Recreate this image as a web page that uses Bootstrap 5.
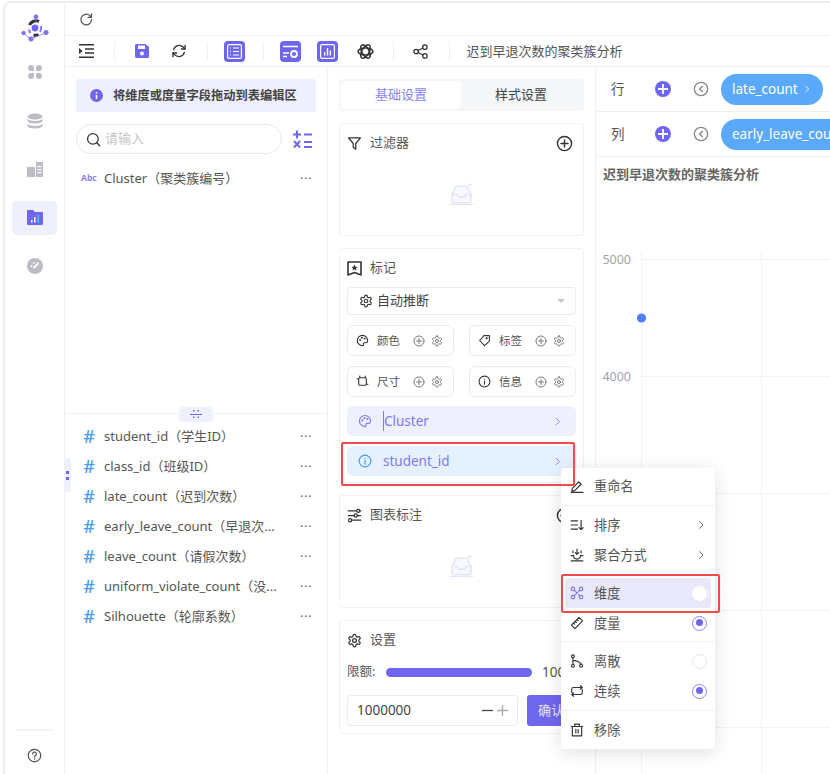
<!DOCTYPE html>
<html lang="zh-CN">
<head>
    <title>聚类簇分析</title>
    <meta charset="utf-8">
    <meta name="viewport" content="width=device-width, initial-scale=1">
    <link href="https://cdn.jsdelivr.net/npm/bootstrap@5.3.3/dist/css/bootstrap.min.css" rel="stylesheet">
    <script src="https://cdn.jsdelivr.net/npm/bootstrap@5.3.3/dist/js/bootstrap.bundle.min.js"></script>
    <style>
        html, body { width: 830px; height: 774px; overflow: hidden; background: #fff; }
        body { font-family: "Noto Sans", "Noto Sans CJK SC", sans-serif; font-size: 13px; color: #555; }
        svg { display: block; flex: none; }
        .ic { fill: none; stroke: currentColor; stroke-width: 2; stroke-linecap: round; stroke-linejoin: round; }

        .app-frame { position: relative; margin: 1px 0 0 3px; width: 827px; height: 773px; border-top: 2px solid #eeeeef; border-left: 2px solid #eeeeef; border-top-left-radius: 8px; }
        .side-rail { flex: none; width: 60px; border-right: 1px solid #f0f0f2; color: #bcbcc4; padding-top: 8px; }
        .rail-item { width: 45px; height: 34px; margin-bottom: 14.5px; border-radius: 5px; }
        .rail-item.is-on { background: #eff0fd; }
        .rail-logo { height: 34px; margin-bottom: 10px; }
        .rail-foot { border-top: 2px solid #f3f3f5; width: 38px; padding-top: 17px; color: #555; margin-bottom: 11px; }

        .top-strip { height: 33px; padding-left: 14px; border-bottom: 1px solid #f3f3f5; color: #555; }
        .tool-strip { height: 31px; padding-left: 2.5px; border-bottom: 1px solid #f0f0f2; color: #333; }
        .tool-cell { width: 37.5px; flex: none; }
        .tool-sep { width: 1px; height: 19px; background: #f0f0f2; margin: 0 8px 0 9px; flex: none; }
        .tool-btn { width: 21px; height: 21px; border-radius: 4px; background: #6f66ee; color: #fff; }
        .tool-title { margin-left: 9px; padding-top: 2px; font-size: 13px; color: #555; white-space: nowrap; }
        .purple { color: #6f66ee; }

        .field-pane { flex: none; width: 263px; border-right: 1px solid #f0f0f2; position: relative; }
        .field-top { height: 347px; padding: 12px 11px 0; border-bottom: 1px solid #f0f0f2; }
        .hint-box { height: 33px; width: 240px; background: #eff0fd; border-radius: 3px; padding-left: 14px; font-weight: 700; font-size: 12.25px; color: #444; }
        .hint-box span { margin-left: 2px; padding-top: 2px; white-space: nowrap; }
        .search-box { width: 206px; height: 30px; border: 1px solid #e8e8ea; border-radius: 15px; padding-left: 9px; color: #c4c4c8; font-size: 13px; }
        .search-box svg { color: #333; }
        .field-row { height: 30px; padding: 0 15px 0 18px; font-size: 13px; color: #555; }
        .field-name { margin-left: 9px; padding-top: 2px; white-space: nowrap; }
        .field-hash { width: 12px; color: #4a9bf6; font-size: 18px; font-weight: 500; line-height: 1; text-align: center; }
        .field-abc { width: 15px; color: #8a83f3; font-size: 8.5px; font-weight: 700; margin-left: -1px; }
        .field-more { color: #666; font-size: 13px; letter-spacing: .5px; margin-left: auto; line-height: 1; }
        .split-grip { position: absolute; top: 340px; left: 114px; width: 34px; height: 15px; background: #eff0fd; border-radius: 4px; color: #6f66ee; }
        .side-grip { position: absolute; top: 391px; left: -1px; width: 7px; height: 34px; background: #eff0fd; border-radius: 0 4px 4px 0; color: #6f66ee; }

        .config-pane { flex: none; width: 268px; border-right: 1px solid #f0f0f2; padding: 12px 11px 0; }
        .tab-bar { width: 245px; height: 32px; background: #f5f6f8; border-radius: 3px; padding: 2px; font-size: 13px; color: #444; }
        .tab-item { width: 120px; height: 28px; }
        .tab-item.is-on { background: #fff; border-radius: 3px; color: #8a83f3; }
        .cfg-card { width: 245px; border: 1px solid #f2f2f4; border-radius: 3px; padding: 0 7px; margin-top: 12px; }
        .cfg-head { height: 38px; font-size: 13px; color: #555; }
        .cfg-head svg { color: #333; margin-right: 8px; }
        .cfg-empty { height: 74px; padding-bottom: 10px; }
        .mark-select { height: 28px; border: 1px solid #ececee; border-radius: 3px; padding: 0 10px 0 11px; color: #444; }
        .mark-chip { width: 107px; height: 31px; border: 1px solid #ececee; border-radius: 6px; padding: 0 10px 0 8px; font-size: 11.5px; color: #555; }
        .mark-chip .chip-gap { margin-left: auto; color: #777; gap: 6px; }
        .mark-pill { height: 30px; border-radius: 6px; padding: 0 13px 0 11px; color: #8079f4; font-size: 13.5px; }
        .pill-lilac { background: #eff0fe; }
        .pill-sky { background: #e6f1ff; }
        .caret-mark { border-left: 1px solid #8079f4; }
        .quota-bar { width: 146px; height: 9px; border-radius: 5px; background: #6f66ee; flex: none; }
        .num-box { width: 171px; height: 31px; border: 1px solid #ececee; border-radius: 3px; padding: 0 9px; font-size: 13.5px; color: #444; flex: none; }
        .ok-btn { width: 60px; height: 31px; border-radius: 3px; background: #6f66ee; color: #e8e6ff; border: 0; font-size: 13px; padding: 0 0 0 11px; flex: none; text-align: left; }

        .chart-pane { flex: 1; min-width: 0; position: relative; overflow: hidden; }
        .shelf-row { height: 45px; border-bottom: 1px solid #f0f0f2; padding-left: 15px; white-space: nowrap; }
        .shelf-label { width: 44px; font-size: 13.5px; color: #555; flex: none; }
        .shelf-add { width: 16px; height: 16px; border-radius: 50%; background: #6f66ee; color: #fff; flex: none; }
        .shelf-back { margin: 0 12px 0 22px; color: #888; }
        .shelf-pill { height: 31px; border-radius: 16px; background: #5aa9fa; color: #fff; padding: 0 11px; font-size: 13.5px; flex: none; }
        .chart-title { padding: 8px 0 0 7px; font-weight: 700; font-size: 13px; color: #666; }
        .chart-svg { position: absolute; left: 0; top: 0; }

        .ctx-menu { position: absolute; left: 556px; top: 465px; width: 154px; height: 281px; background: #fff; border-radius: 3px; box-shadow: 0 3px 18px rgba(0,0,0,.13); font-size: 13.2px; color: #555; z-index: 5; padding-top: 3px; }
        .ctx-item { height: 30px; padding: 0 8px 0 9px; }
        .ctx-menu svg.lead { color: #333; margin-right: 10px; }
        .ctx-menu .end { margin-left: auto; }
        .ctx-menu svg.lead + span { padding-top: 2px; }
        .ctx-line { height: 1px; background: #f0f0f2; }
        .ctx-on { background: #e9e8fb; margin: 0 4px; padding: 0 4px 0 5px; border-radius: 3px; height: 30px; }
        .ctx-menu .ctx-on svg.lead { color: #8079f4; }
        .radio-off { width: 15px; height: 15px; border-radius: 50%; border: 1px solid #e4e4e6; background: #fff; }
        .radio-on { width: 15px; height: 15px; border-radius: 50%; border: 1.5px solid #8a83f3; padding: 2.5px; background: #fff; }
        .radio-on::after { content: ""; display: block; width: 7px; height: 7px; border-radius: 50%; background: #6f66ee; }

        .red-box { position: absolute; border: 2px solid #f04a4a; border-radius: 2px; z-index: 6; pointer-events: none; }
        .red-one { left: 336px; top: 439px; width: 234px; height: 44px; }
        .red-two { left: 556px; top: 571px; width: 159px; height: 39px; }
    </style>
</head>

<body>

    <svg width="0" height="0" style="position:absolute">
        <symbol id="i-plus-o" viewBox="0 0 24 24"><circle cx="12" cy="12" r="10"/><path d="M12 7v10M7 12h10"/></symbol>
        <symbol id="i-gear" viewBox="0 0 24 24"><path d="M12.220 2h-.44a2 2 0 0 0-2 2v.18a2 2 0 0 1-1 1.730l-.43.25a2 2 0 0 1-2 0l-.15-.08a2 2 0 0 0-2.730.73l-.22.38a2 2 0 0 0 .73 2.730l.15.1a2 2 0 0 1 1 1.720v.51a2 2 0 0 1-1 1.740l-.15.09a2 2 0 0 0-.73 2.730l.22.38a2 2 0 0 0 2.730.73l.15-.08a2 2 0 0 1 2 0l.43.25a2 2 0 0 1 1 1.730V20a2 2 0 0 0 2 2h.44a2 2 0 0 0 2-2v-.18a2 2 0 0 1 1-1.730l.43-.25a2 2 0 0 1 2 0l.15.08a2 2 0 0 0 2.730-.73l.22-.39a2 2 0 0 0-.73-2.730l-.15-.08a2 2 0 0 1-1-1.740v-.5a2 2 0 0 1 1-1.740l.15-.09a2 2 0 0 0 .73-2.730l-.22-.38a2 2 0 0 0-2.730-.73l-.15.08a2 2 0 0 1-2 0l-.43-.25a2 2 0 0 1-1-1.730V4a2 2 0 0 0-2-2z"/><circle cx="12" cy="12" r="3"/></symbol>
        <symbol id="i-palette" viewBox="0 0 24 24"><path d="M12 2.500a9.500 9.500 0 0 0 0 19c1.700 0 2.300-1.200 1.800-2.400-.6-1.500.3-3 2-3h2.700c1.800 0 3-1.200 3-3.100 0-6-4.500-10.500-9.500-10.500z"/><circle cx="7.500" cy="11" r=".8"/><circle cx="11" cy="7" r=".8"/><circle cx="16" cy="8.500" r=".8"/></symbol>
        <symbol id="i-info" viewBox="0 0 24 24"><circle cx="12" cy="12" r="10"/><path d="M12 11v6M12 7.400v.2"/></symbol>
        <symbol id="i-tag" viewBox="0 0 24 24"><path d="M3 12l8-9h10v10l-9 8.500z"/><circle cx="16" cy="8" r="1"/></symbol>
        <symbol id="i-size" viewBox="0 0 24 24"><path d="M7 5h10a2 2 0 0 1 2 2v10a2 2 0 0 1-2 2H7a2 2 0 0 1-2-2V7a2 2 0 0 1 2-2zM7 2v3M17 2v3M22 17h-3M2 7h3"/></symbol>
        <symbol id="i-chev" viewBox="0 0 24 24"><path d="M9 5l7 7-7 7"/></symbol>
        <symbol id="i-back" viewBox="0 0 24 24"><circle cx="12" cy="12" r="10"/><path d="M14 8l-4 4 4 4"/></symbol>
        <symbol id="i-inbox" viewBox="0 0 24 24"><path d="M3 12l3-7c.3-.7 1-1 1.500-1h9c.6 0 1.200.3 1.500 1l3 7v6a2 2 0 0 1-2 2H5a2 2 0 0 1-2-2z" fill="#f8f8ff"/><path d="M3 12h5l1.500 2.500h5L16 12h5"/><path d="M20 1v3M18.500 2.500h3M1 21.500h22" stroke-width="1"/></symbol>
    </svg>

    <div class="app-frame d-flex">

        <!-- rail -->
        <div class="side-rail d-flex flex-column align-items-center">
            <div class="rail-logo d-flex align-items-center justify-content-center">
                <svg width="28" height="28" viewBox="0 0 28 28">
                    <path d="M8.500 11a7 7 0 0 1 9.500-3.500" fill="none" stroke="#333" stroke-width="3"/>
                    <path d="M20 12a7 7 0 0 1-1 6" fill="none" stroke="#8079f4" stroke-width="2"/>
                    <path d="M17.500 20.500a7 7 0 0 1-5 .5" fill="none" stroke="#333" stroke-width="3"/>
                    <path d="M8 15.500a7 7 0 0 0 1.500 3.500" fill="none" stroke="#8079f4" stroke-width="2"/>
                    <circle cx="14" cy="14" r="3.400" fill="#6f66ee"/>
                    <g fill="#7a72f2" stroke="#7a72f2" stroke-width=".8"><circle cx="15" cy="2.800" r="2"/><circle cx="2.500" cy="19" r="1.800"/><circle cx="10" cy="25" r="2.200"/><circle cx="25" cy="18.500" r="2.200"/><path d="M15 3v5M2.500 19l6 5.500M10 25l15-6.500" fill="none"/></g>
                </svg>
            </div>
            <div class="rail-item d-flex align-items-center justify-content-center">
                <svg width="16" height="16" viewBox="0 0 16 16" fill="currentColor"><path d="M1 4a3 3 0 0 1 6 0v3H4a3 3 0 0 1-3-3zM9 4a3 3 0 0 1 6 0 3 3 0 0 1-3 3H9zM1 12a3 3 0 0 1 3-3h3v3a3 3 0 0 1-6 0zM9 9h3a3 3 0 0 1 0 6 3 3 0 0 1-3-3z"/></svg>
            </div>
            <div class="rail-item d-flex align-items-center justify-content-center">
                <svg width="16" height="16" viewBox="0 0 16 16" fill="currentColor"><ellipse cx="8" cy="3.500" rx="7.500" ry="3"/><path d="M.5 5.500c1 1.800 4 2.500 7.500 2.500s6.500-.7 7.500-2.500V8c-1 1.800-4 2.500-7.500 2.500S1.500 9.800.5 8zM.5 10.500c1 1.800 4 2.500 7.500 2.500s6.500-.7 7.500-2.500V13c-1 1.800-4 2.500-7.500 2.500S1.500 14.800.5 13z"/></svg>
            </div>
            <div class="rail-item d-flex align-items-center justify-content-center">
                <svg width="16" height="15" viewBox="0 0 16 15" fill="currentColor"><path d="M0 5h8v10H0z"/><path d="M9 0h7v15H9zM10.500 4v1.200h4V4zM10.500 7v1.200h4V7zM10.500 10v1.200h4V10z" fill-rule="evenodd"/></svg>
            </div>
            <div class="rail-item is-on d-flex align-items-center justify-content-center">
                <svg width="16" height="15" viewBox="0 0 16 15"><path d="M0 1a1 1 0 0 1 1-1h5l2 2h7a1 1 0 0 1 1 1v11a1 1 0 0 1-1 1H1a1 1 0 0 1-1-1z" fill="#6f66ee"/><path d="M4 10h1.500v2.500H4zM7 7h1.500v5.500H7z" fill="#fff"/><path d="M10.500 5H12v7.500h-1.500z" fill="#4fc3e8"/></svg>
            </div>
            <div class="rail-item d-flex align-items-center justify-content-center">
                <svg width="16" height="16" viewBox="0 0 16 16"><circle cx="8" cy="8" r="8" fill="currentColor"/><path d="M7 9.500l4-4" stroke="#fff" stroke-width="2" stroke-linecap="round"/><circle cx="4.500" cy="8" r=".9" fill="#fff"/><circle cx="7" cy="4.800" r=".9" fill="#fff"/></svg>
            </div>
            <div class="rail-foot mt-auto d-flex justify-content-center">
                <svg class="ic" width="15" height="15" viewBox="0 0 24 24"><circle cx="12" cy="12" r="10"/><path d="M9 9.500a3 3 0 1 1 4.500 2.600c-1 .6-1.500 1.100-1.500 2.200M12 17.500v.1"/></svg>
            </div>
        </div>

        <!-- main -->
        <div class="flex-grow-1 d-flex flex-column" style="min-width:0">
            <div class="top-strip d-flex align-items-center">
                <svg class="ic" width="15" height="15" viewBox="0 0 24 24"><path d="M20 12a8.500 8.500 0 1 1-2.700-6.200L20 8.500M20 3v5.500h-5.500"/></svg>
            </div>
            <div class="tool-strip d-flex align-items-center">
                <div class="tool-cell d-flex justify-content-center">
                    <svg width="15" height="14" viewBox="0 0 15 14" fill="currentColor"><path d="M0 0h15v1.600H0zM6 4.200h9v1.600H6zM6 8.200h9v1.600H6zM0 12.400h15V14H0zM0 4l3.600 3L0 10z"/></svg>
                </div>
                <div class="tool-sep"></div>
                <div class="tool-cell d-flex justify-content-center purple">
                    <svg width="14" height="14" viewBox="0 0 14 14"><path fill-rule="evenodd" fill="currentColor" d="M1.500 0h9L14 3v9.500a1.500 1.500 0 0 1-1.500 1.500h-11A1.500 1.500 0 0 1 0 12.500v-11A1.500 1.500 0 0 1 1.500 0zM3 1.500V5h7V1.500zM7 7.500a2 2 0 1 0 0 4 2 2 0 0 0 0-4z"/></svg>
                </div>
                <div class="tool-cell d-flex justify-content-center">
                    <svg class="ic" width="16" height="16" viewBox="0 0 24 24" stroke-width="2.400"><path d="M4 10a8.500 8.500 0 0 1 14.500-3.500L21 9M20 14a8.500 8.500 0 0 1-14.500 3.500L3 15"/><path d="M21 3.500V9h-5.500M3 20.500V15h5.500"/></svg>
                </div>
                <div class="tool-sep"></div>
                <div class="tool-cell d-flex justify-content-center">
                    <div class="tool-btn d-flex align-items-center justify-content-center">
                        <svg width="15" height="15" viewBox="0 0 15 15" fill="none" stroke="currentColor" stroke-width="1.200"><rect x=".6" y=".6" width="13.800" height="13.800" rx="1.500"/><path d="M3 4h1M6 4h6M3 7.500h1M6 7.500h6M3 11h1M6 11h6"/></svg>
                    </div>
                </div>
                <div class="tool-sep"></div>
                <div class="tool-cell d-flex justify-content-center">
                    <div class="tool-btn d-flex align-items-center justify-content-center">
                        <svg width="17" height="15" viewBox="0 0 17 15"><path d="M1 2.500h15M1 9h6M1 12.500h4" stroke="currentColor" stroke-width="1.500" fill="none"/><circle cx="12" cy="10" r="3" fill="none" stroke="currentColor" stroke-width="1.800"/></svg>
                    </div>
                </div>
                <div class="tool-cell d-flex justify-content-center">
                    <div class="tool-btn d-flex align-items-center justify-content-center">
                        <svg width="15" height="15" viewBox="0 0 15 15"><rect x=".6" y=".6" width="13.800" height="13.800" rx="1.500" fill="none" stroke="currentColor" stroke-width="1.200"/><path d="M4 8h1.400v3.500H4zM6.800 4h1.400v7.500H6.800zM9.600 6.500H11v5H9.600z" fill="currentColor"/></svg>
                    </div>
                </div>
                <div class="tool-cell d-flex justify-content-center">
                    <svg width="17" height="17" viewBox="0 0 24 24" fill="none" stroke="currentColor" stroke-width="2.200"><ellipse cx="12" cy="12" rx="10.500" ry="5"/><ellipse cx="12" cy="12" rx="10.500" ry="5" transform="rotate(60 12 12)"/><ellipse cx="12" cy="12" rx="10.500" ry="5" transform="rotate(120 12 12)"/></svg>
                </div>
                <div class="tool-sep"></div>
                <div class="tool-cell d-flex justify-content-center">
                    <svg class="ic" width="15" height="15" viewBox="0 0 24 24"><circle cx="5" cy="12" r="3.500"/><circle cx="19" cy="5" r="3.500"/><circle cx="19" cy="19" r="3.500"/><path d="M8 10.500l8-4M8 13.500l8 4"/></svg>
                </div>
                <div class="tool-sep"></div>
                <div class="tool-title">迟到早退次数的聚类簇分析</div>
            </div>

            <div class="flex-grow-1 d-flex" style="min-height:0">

                <!-- fields -->
                <div class="field-pane">
                    <div class="field-top">
                        <div class="hint-box d-flex align-items-center gap-2">
                            <svg class="purple" width="13" height="13" viewBox="0 0 13 13"><circle cx="6.500" cy="6.500" r="6.500" fill="currentColor"/><path d="M6.500 3v1.500M6.500 6v4" stroke="#fff" stroke-width="1.500"/></svg>
                            <span>将维度或度量字段拖动到表编辑区</span>
                        </div>
                        <div class="d-flex align-items-center mt-2 pt-1">
                            <div class="search-box d-flex align-items-center gap-1">
                                <svg class="ic" width="15" height="15" viewBox="0 0 24 24"><circle cx="11" cy="11" r="8.500"/><path d="M17.500 17.500L22 22"/></svg>
                                <span>请输入</span>
                            </div>
                            <svg class="ms-auto purple me-1" width="19" height="19" viewBox="0 0 19 19" fill="none" stroke="currentColor" stroke-width="2"><path d="M0 4.500h8M4 .5v8M11 4.500h8M1 11l6 6.500M7 11l-6 6.500M11 12h8M11 17h8"/></svg>
                        </div>
                        <div class="field-row d-flex align-items-center" style="padding:0 4px 0 6px;margin-top:9px">
                            <span class="field-abc">Abc</span>
                            <span class="field-name" style="margin-left:8px">Cluster（聚类簇编号）</span>
                            <span class="field-more">···</span>
                        </div>
                    </div>
                    <div class="split-grip d-flex align-items-center justify-content-center">
                        <svg width="12" height="9" viewBox="0 0 12 9" fill="currentColor"><path d="M0 4h12v1H0zM3 0h1.500v1.500H3zM7.500 0H9v1.500H7.500zM3 6.500h1.500V8H3zM7.500 6.500H9V8H7.500z"/></svg>
                    </div>
                    <div class="side-grip d-flex align-items-center justify-content-center">
                        <svg width="3" height="9" viewBox="0 0 3 9" fill="currentColor"><rect width="3" height="3"/><rect y="6" width="3" height="3"/></svg>
                    </div>
                    <div style="padding-top:7px">
                        <div class="field-row d-flex align-items-center"><span class="field-hash">#</span><span class="field-name">student_id（学生ID）</span><span class="field-more">···</span></div>
                        <div class="field-row d-flex align-items-center"><span class="field-hash">#</span><span class="field-name">class_id（班级ID）</span><span class="field-more">···</span></div>
                        <div class="field-row d-flex align-items-center"><span class="field-hash">#</span><span class="field-name">late_count（迟到次数）</span><span class="field-more">···</span></div>
                        <div class="field-row d-flex align-items-center"><span class="field-hash">#</span><span class="field-name">early_leave_count（早退次...</span><span class="field-more">···</span></div>
                        <div class="field-row d-flex align-items-center"><span class="field-hash">#</span><span class="field-name">leave_count（请假次数）</span><span class="field-more">···</span></div>
                        <div class="field-row d-flex align-items-center"><span class="field-hash">#</span><span class="field-name">uniform_violate_count（没...</span><span class="field-more">···</span></div>
                        <div class="field-row d-flex align-items-center"><span class="field-hash">#</span><span class="field-name">Silhouette（轮廓系数）</span><span class="field-more">···</span></div>
                    </div>
                </div>

                <!-- settings -->
                <div class="config-pane">
                    <div class="tab-bar d-flex">
                        <div class="tab-item is-on d-flex align-items-center justify-content-center">基础设置</div>
                        <div class="tab-item d-flex align-items-center justify-content-center">样式设置</div>
                    </div>

                    <div class="cfg-card" style="height:113px">
                        <div class="cfg-head d-flex align-items-center">
                            <svg class="ic" width="15" height="15" viewBox="0 0 24 24"><path d="M2.500 3h19l-7.500 9v9l-4-3v-6z"/></svg>
                            <span>过滤器</span>
                            <svg class="ic" width="17" height="17" viewBox="0 0 24 24" style="margin:0 3px 0 auto"><use href="#i-plus-o"/></svg>
                        </div>
                        <div class="cfg-empty d-flex align-items-center justify-content-center">
                            <svg class="ic" width="25" height="25" viewBox="0 0 24 24" style="color:#e4e4fa;stroke-width:1.500"><use href="#i-inbox"/></svg>
                        </div>
                    </div>

                    <div class="cfg-card">
                        <div class="cfg-head d-flex align-items-center">
                            <svg width="15" height="15" viewBox="0 0 15 15"><path d="M1 1h13v13l-6.500-2.500L1 14z" fill="none" stroke="currentColor" stroke-width="1.600" stroke-linejoin="round"/><path d="M7.500 3.500l1 2.200 2.200.2-1.700 1.400.5 2.200-2-1.200-2 1.200.5-2.200L4.300 5.900l2.200-.2z" fill="currentColor"/></svg>
                            <span>标记</span>
                        </div>
                        <div class="mark-select d-flex align-items-center">
                            <svg class="ic me-1" width="14" height="14" viewBox="0 0 24 24" style="color:#333"><use href="#i-gear"/></svg>
                            <span>自动推断</span>
                            <svg class="ms-auto" width="8" height="4" viewBox="0 0 8 4" fill="#c8c8cc"><path d="M0 0h8L4 4z"/></svg>
                        </div>
                        <div class="d-flex justify-content-between" style="margin-top:10px">
                            <div class="mark-chip d-flex align-items-center">
                                <svg class="ic me-2" width="13" height="13" viewBox="0 0 24 24" style="color:#333"><use href="#i-palette"/></svg><span>颜色</span>
                                <span class="chip-gap d-flex">
                                    <svg class="ic" width="12" height="12" viewBox="0 0 24 24"><use href="#i-plus-o"/></svg>
                                    <svg class="ic" width="12" height="12" viewBox="0 0 24 24"><use href="#i-gear"/></svg>
                                </span>
                            </div>
                            <div class="mark-chip d-flex align-items-center">
                                <svg class="ic me-2" width="13" height="13" viewBox="0 0 24 24" style="color:#333"><use href="#i-tag"/></svg><span>标签</span>
                                <span class="chip-gap d-flex">
                                    <svg class="ic" width="12" height="12" viewBox="0 0 24 24"><use href="#i-plus-o"/></svg>
                                    <svg class="ic" width="12" height="12" viewBox="0 0 24 24"><use href="#i-gear"/></svg>
                                </span>
                            </div>
                        </div>
                        <div class="d-flex justify-content-between" style="margin-top:10px">
                            <div class="mark-chip d-flex align-items-center">
                                <svg class="ic me-2" width="13" height="13" viewBox="0 0 24 24" style="color:#333"><use href="#i-size"/></svg><span>尺寸</span>
                                <span class="chip-gap d-flex">
                                    <svg class="ic" width="12" height="12" viewBox="0 0 24 24"><use href="#i-plus-o"/></svg>
                                    <svg class="ic" width="12" height="12" viewBox="0 0 24 24"><use href="#i-gear"/></svg>
                                </span>
                            </div>
                            <div class="mark-chip d-flex align-items-center">
                                <svg class="ic me-2" width="13" height="13" viewBox="0 0 24 24" style="color:#333"><use href="#i-info"/></svg><span>信息</span>
                                <span class="chip-gap d-flex">
                                    <svg class="ic" width="12" height="12" viewBox="0 0 24 24"><use href="#i-plus-o"/></svg>
                                    <svg class="ic" width="12" height="12" viewBox="0 0 24 24"><use href="#i-gear"/></svg>
                                </span>
                            </div>
                        </div>
                        <div class="mark-pill pill-lilac d-flex align-items-center" style="margin-top:9px">
                            <svg class="ic" width="14" height="14" viewBox="0 0 24 24" style="margin-right:11px"><use href="#i-palette"/></svg>
                            <span class="caret-mark">Cluster</span>
                            <svg class="ic ms-auto" width="11" height="11" viewBox="0 0 24 24"><use href="#i-chev"/></svg>
                        </div>
                        <div class="mark-pill pill-sky d-flex align-items-center" style="margin:10px 0 6px">
                            <svg class="ic" width="14" height="14" viewBox="0 0 24 24" style="margin-right:11px;color:#4a9bf6"><use href="#i-info"/></svg>
                            <span>student_id</span>
                            <svg class="ic ms-auto" width="11" height="11" viewBox="0 0 24 24"><use href="#i-chev"/></svg>
                        </div>
                    </div>

                    <div class="cfg-card" style="height:113px">
                        <div class="cfg-head d-flex align-items-center">
                            <svg class="ic" width="15" height="15" viewBox="0 0 24 24"><circle cx="18" cy="4.500" r="2.500"/><circle cx="14" cy="12" r="2.500"/><circle cx="5" cy="19.500" r="2.500"/><path d="M2 4.500h13M21 4.500h1M2 12h9M17 12h5M8 19.500h14"/></svg>
                            <span>图表标注</span>
                            <svg class="ic" width="17" height="17" viewBox="0 0 24 24" style="margin:0 3px 0 auto"><use href="#i-plus-o"/></svg>
                        </div>
                        <div class="cfg-empty d-flex align-items-center justify-content-center">
                            <svg class="ic" width="25" height="25" viewBox="0 0 24 24" style="color:#e4e4fa;stroke-width:1.500"><use href="#i-inbox"/></svg>
                        </div>
                    </div>

                    <div class="cfg-card" style="height:114px">
                        <div class="cfg-head d-flex align-items-center">
                            <svg class="ic" width="15" height="15" viewBox="0 0 24 24"><use href="#i-gear"/></svg>
                            <span>设置</span>
                        </div>
                        <div class="d-flex align-items-center" style="height:26px;white-space:nowrap">
                            <span style="width:39px;flex:none;font-size:12.5px">限额:</span>
                            <div class="quota-bar"></div>
                            <span style="margin-left:10px;font-size:13.5px">1000000</span>
                        </div>
                        <div class="d-flex" style="margin-top:10px;width:240px">
                            <div class="num-box d-flex align-items-center">
                                <span>1000000</span>
                                <span class="ms-auto d-flex gap-1 align-items-center">
                                    <svg width="11" height="11" viewBox="0 0 11 11" stroke="#444" stroke-width="1.300"><path d="M0 5.500h11"/></svg>
                                    <svg width="11" height="11" viewBox="0 0 11 11" stroke="#aaa" stroke-width="1.300"><path d="M0 5.500h11M5.500 0v11"/></svg>
                                </span>
                            </div>
                            <button class="ok-btn" type="button" style="margin-left:9px">确认</button>
                        </div>
                    </div>
                </div>

                <!-- chart -->
                <div class="chart-pane">
                    <svg class="chart-svg" width="234" height="707" viewBox="0 0 234 707">
                        <g stroke="#f3f3f5" stroke-width="1">
                            <path d="M45 192.500H234M45 309.500H234M45 426.500H234M45 543.500H234M45 660.500H234"/>
                            <path d="M45.500 185V707M165.500 185V707"/>
                        </g>
                        <g fill="#a0a4ae" font-size="12.5" font-family="Noto Sans, sans-serif" text-anchor="end">
                            <text x="35" y="197">5000</text>
                            <text x="35" y="314">4000</text>
                        </g>
                        <circle cx="45.500" cy="251" r="4.600" fill="#4f81f2"/>
                    </svg>
                    <div class="shelf-row d-flex align-items-center position-relative bg-white">
                        <span class="shelf-label">行</span>
                        <span class="shelf-add d-flex align-items-center justify-content-center"><svg width="10" height="10" viewBox="0 0 10 10" stroke="#fff" stroke-width="1.800"><path d="M0 5h10M5 0v10"/></svg></span>
                        <svg class="ic shelf-back" width="16" height="16" viewBox="0 0 24 24" stroke-width="1.500"><use href="#i-back"/></svg>
                        <span class="shelf-pill d-flex align-items-center gap-1">late_count <svg class="ic" width="10" height="10" viewBox="0 0 24 24"><use href="#i-chev"/></svg></span>
                    </div>
                    <div class="shelf-row d-flex align-items-center position-relative bg-white">
                        <span class="shelf-label">列</span>
                        <span class="shelf-add d-flex align-items-center justify-content-center"><svg width="10" height="10" viewBox="0 0 10 10" stroke="#fff" stroke-width="1.800"><path d="M0 5h10M5 0v10"/></svg></span>
                        <svg class="ic shelf-back" width="16" height="16" viewBox="0 0 24 24" stroke-width="1.500"><use href="#i-back"/></svg>
                        <span class="shelf-pill d-flex align-items-center">early_leave_count</span>
                    </div>
                    <div class="chart-title position-relative">迟到早退次数的聚类簇分析</div>
                </div>
            </div>
        </div>

        <!-- context menu -->
        <div class="ctx-menu">
            <div class="ctx-item d-flex align-items-center">
                <svg class="ic lead" width="14" height="14" viewBox="0 0 24 24"><path d="M4 16l11-11 4 4-11 11-5 1zM2 23h20"/></svg><span>重命名</span>
            </div>
            <div class="ctx-line" style="margin:4px 0"></div>
            <div class="ctx-item d-flex align-items-center">
                <svg class="ic lead" width="14" height="14" viewBox="0 0 24 24"><path d="M2 5h11M2 12h11M2 19h11M19 4v16M15.500 16.500L19 20l3.500-3.500"/></svg><span>排序</span>
                <svg class="ic end" width="12" height="12" viewBox="0 0 24 24" style="color:#777"><use href="#i-chev"/></svg>
            </div>
            <div class="ctx-item d-flex align-items-center">
                <svg class="ic lead" width="14" height="14" viewBox="0 0 24 24"><path d="M2 13h4c0 4 2.500 6 6 6s6-2 6-6h4M2 22h20M12 2v9M9 8l3 3 3-3M5 5v3M19 5v3"/></svg><span>聚合方式</span>
                <svg class="ic end" width="12" height="12" viewBox="0 0 24 24" style="color:#777"><use href="#i-chev"/></svg>
            </div>
            <div style="height:8px"></div>
            <div class="ctx-on d-flex align-items-center">
                <svg class="ic lead" width="14" height="14" viewBox="0 0 24 24"><circle cx="5" cy="5" r="3"/><circle cx="19" cy="5" r="3"/><circle cx="5" cy="19" r="3"/><circle cx="19" cy="19" r="3"/><path d="M7 7l10 10M17 7L7 17"/></svg><span>维度</span>
                <span class="radio-off end" style="border-color:#fff"></span>
            </div>
            <div class="ctx-item d-flex align-items-center">
                <svg class="ic lead" width="14" height="14" viewBox="0 0 24 24"><path d="M15.500 2.500l6 6L8.500 21.500l-6-6zM12 6l2 2M9 9l2 2M6 12l2 2"/></svg><span>度量</span>
                <span class="radio-on end"></span>
            </div>
            <div class="ctx-line" style="margin:3px 0 4px"></div>
            <div class="ctx-item d-flex align-items-center">
                <svg class="ic lead" width="14" height="14" viewBox="0 0 24 24"><circle cx="5" cy="4" r="2.500"/><circle cx="5" cy="20" r="2.500"/><circle cx="19" cy="20" r="2.500"/><path d="M5 7v10M5 11c5 0 9 1 14 6"/></svg><span>离散</span>
                <span class="radio-off end"></span>
            </div>
            <div class="ctx-item d-flex align-items-center">
                <svg class="ic lead" width="14" height="14" viewBox="0 0 24 24"><path d="M3 14V9a3 3 0 0 1 3-3h15M18 3l3 3-3 3M21 10v5a3 3 0 0 1-3 3H3M6 15l-3 3 3 3"/></svg><span>连续</span>
                <span class="radio-on end"></span>
            </div>
            <div class="ctx-line" style="margin:4px 0"></div>
            <div class="ctx-item d-flex align-items-center">
                <svg class="ic lead" width="14" height="14" viewBox="0 0 24 24"><path d="M2 6h20M8 6V2h8v4M4 6v16h16V6M10 11v6M14 11v6"/></svg><span>移除</span>
            </div>
        </div>

        <div class="red-box red-one"></div>
        <div class="red-box red-two"></div>
    </div>

</body>
</html>
